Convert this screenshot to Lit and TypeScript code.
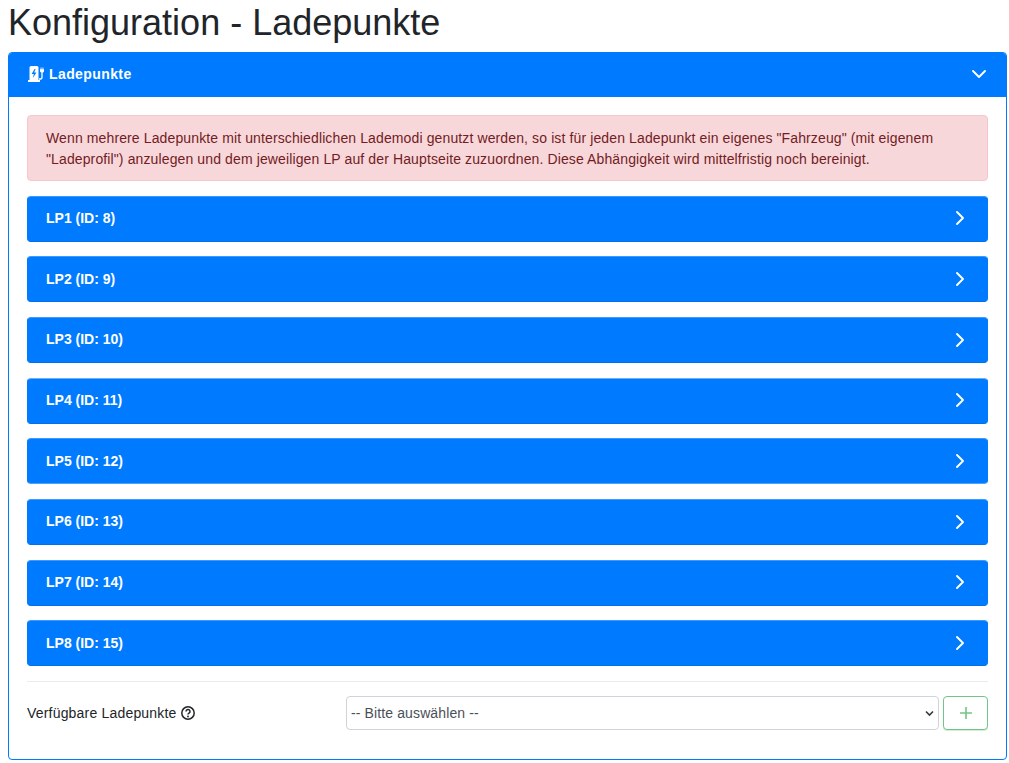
import { LitElement, html, css, svg } from 'lit';
import { customElement } from 'lit/decorators.js';

const POINTS = [
  'LP1 (ID: 8)',
  'LP2 (ID: 9)',
  'LP3 (ID: 10)',
  'LP4 (ID: 11)',
  'LP5 (ID: 12)',
  'LP6 (ID: 13)',
  'LP7 (ID: 14)',
  'LP8 (ID: 15)',
];

const chevronRight = svg`<path d="M5 2l6 6-6 6" fill="none" stroke="currentColor" stroke-width="1.9" stroke-linecap="round" stroke-linejoin="round"/>`;
const chevronDown = svg`<path d="M2 5l6 6 6-6" fill="none" stroke="currentColor" stroke-width="1.9" stroke-linecap="round" stroke-linejoin="round"/>`;

@customElement('app-root')
export class AppRoot extends LitElement {
  static styles = css`
    :host {
      display: block;
      box-sizing: border-box;
      height: 763px;
      overflow: hidden;
      padding: 0 2px 0 8px;
      background: #fff;
      color: #212529;
      font-family: 'Liberation Sans', Arial, sans-serif;
      font-size: 14px;
      line-height: 21px;
    }

    h1 {
      margin: 0;
      height: 52px;
      font-size: 36px;
      font-weight: 400;
      line-height: 46px;
    }

    .card {
      border: 1px solid #007bff;
      border-radius: 4px;
      height: 708px;
      box-sizing: border-box;
      overflow: hidden;
    }

    .card-header {
      box-sizing: border-box;
      display: flex;
      align-items: center;
      height: 44px;
      padding: 0 19px 2px;
      background: #007bff;
      color: #fff;
      font-weight: 700;
    }

    .title {
      letter-spacing: 0.4px;
    }

    .card-header .brand {
      width: 18px;
      height: 16px;
      margin-right: 3px;
    }

    .chevron {
      width: 16px;
      height: 16px;
      margin-left: auto;
    }

    .row .chevron {
      margin-top: -0.6px;
    }

    .card-body {
      padding: 18px 18px 0;
    }

    .alert {
      box-sizing: border-box;
      height: 66px;
      margin-bottom: 14.6px;
      padding: 12px 18px;
      background: #f8d7da;
      border: 1px solid #f5c6cb;
      border-radius: 4px;
      color: #721c24;
      letter-spacing: 0.12px;
    }

    .rows {
      display: flex;
      flex-direction: column;
      gap: 14.67px;
    }

    .row {
      box-sizing: border-box;
      display: flex;
      align-items: center;
      height: 46px;
      padding: 0 19px 0 18px;
      background: #007bff;
      border: 1px solid #007bff;
      border-top-color: #3d9bff;
      border-bottom-color: #0071eb;
      border-radius: 4px;
      color: #fff;
      font-weight: 700;
    }

    .row:nth-child(4) {
      border-top-color: #6ab0f5;
    }

    .row:nth-child(5) {
      border-bottom-color: #4da3ff;
    }

    hr {
      margin: 15px 0 14px;
      border: 0;
      border-top: 1px solid #e9ecef;
    }

    .add {
      display: flex;
      align-items: center;
    }

    .add label {
      display: flex;
      align-items: center;
      gap: 4px;
      width: 319px;
      letter-spacing: 0.19px;
    }

    .help {
      width: 14px;
      height: 14px;
    }

    .select-wrap {
      position: relative;
      flex: 1;
      min-width: 0;
      height: 34px;
    }

    select {
      box-sizing: border-box;
      display: block;
      width: 100%;
      height: 34px;
      padding: 0 4px;
      appearance: none;
      background: #fff;
      border: 1px solid #ced4da;
      border-radius: 4px;
      color: #495057;
      font: inherit;
      letter-spacing: 0.12px;
    }

    .select-arrow {
      position: absolute;
      top: 14px;
      right: 5px;
      width: 9px;
      height: 7px;
      pointer-events: none;
    }

    .plus {
      box-sizing: border-box;
      display: flex;
      align-items: center;
      justify-content: center;
      width: 45px;
      height: 34px;
      margin-left: 4px;
      padding: 0;
      background: #fff;
      border: 1px solid #28a745;
      border-radius: 4px;
      box-shadow: 0 1px 0 rgba(40, 167, 69, 0.3);
      opacity: 0.65;
      color: #28a745;
    }

    .plus svg {
      width: 14px;
      height: 14px;
    }
  `;

  render() {
    return html`
      <h1>Konfiguration - Ladepunkte</h1>
      <section class="card">
        <header class="card-header">
          <svg class="brand" viewBox="0 0 18 16">
            <path
              fill="#fff"
              fill-rule="evenodd"
              d="M1.5 1.5A1.5 1.5 0 0 1 3 0h6a1.5 1.5 0 0 1 1.5 1.5V14H12v2H0v-2h1.5V1.5zM6.6 3L3.6 8h2.2l-.9 4 3.5-5.4H6.2L7.6 3z"
            />
            <path
              fill="none"
              stroke="#fff"
              stroke-width="1.3"
              d="M11 13h1.5a1.5 1.5 0 0 0 1.5-1.5V6"
            />
            <path fill="#fff" d="M12.6 1.5h.9V3.2h1V1.5h.9V3.2h.6v2.2l-1 1h-2l-1-1V3.2h.6z" />
          </svg>
          <span class="title">Ladepunkte</span>
          <svg class="chevron" viewBox="0 0 16 16">${chevronDown}</svg>
        </header>
        <div class="card-body">
          <div class="alert">
            Wenn mehrere Ladepunkte mit unterschiedlichen Lademodi genutzt werden, so ist für jeden
            Ladepunkt ein eigenes "Fahrzeug" (mit eigenem "Ladeprofil") anzulegen und dem jeweiligen
            LP auf der Hauptseite zuzuordnen. Diese Abhängigkeit wird mittelfristig noch bereinigt.
          </div>
          <div class="rows">
            ${POINTS.map(
              (name) => html`
                <div class="row">
                  ${name}
                  <svg class="chevron" viewBox="0 0 16 16">${chevronRight}</svg>
                </div>
              `
            )}
          </div>
          <hr />
          <div class="add">
            <label>
              Verfügbare Ladepunkte
              <svg class="help" viewBox="0 0 14 14">
                <circle cx="7" cy="7" r="6.2" fill="none" stroke="#212529" stroke-width="1.5" />
                <path
                  d="M5 5.5a2 2 0 1 1 3 1.7c-.7.4-1 .7-1 1.3"
                  fill="none"
                  stroke="#212529"
                  stroke-width="1.5"
                />
                <circle cx="7" cy="10.5" r=".9" fill="#212529" />
              </svg>
            </label>
            <div class="select-wrap">
              <select>
                <option>-- Bitte auswählen --</option>
              </select>
              <svg class="select-arrow" viewBox="0 0 9 7">
                <path d="M1 1.5l3.5 3.5 3.5-3.5" fill="none" stroke="#343a40" stroke-width="1.6" />
              </svg>
            </div>
            <button class="plus" aria-label="Hinzufügen">
              <svg viewBox="0 0 14 14">
                <path d="M7 1v12M1 7h12" stroke="currentColor" stroke-width="1.6" fill="none" />
              </svg>
            </button>
          </div>
        </div>
      </section>
    `;
  }
}

declare global {
  interface HTMLElementTagNameMap {
    'app-root': AppRoot;
  }
}
